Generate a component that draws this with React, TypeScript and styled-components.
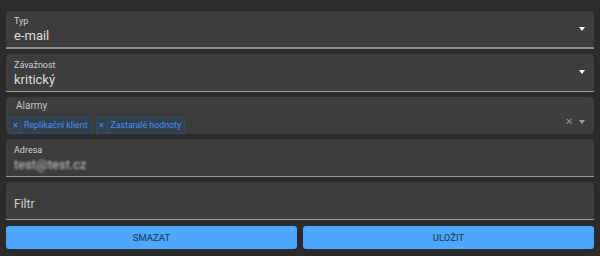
import styled, { createGlobalStyle } from "styled-components";

const GlobalStyle = createGlobalStyle`
  html, body {
    margin: 0;
    padding: 0;
    background: #2b2b2b;
    font-family: Roboto, "Liberation Sans", sans-serif;
  }
`;

const Form = styled.div`
  display: flex;
  flex-direction: column;
  gap: 5px;
  padding: 11px 6px 0 6px;
  width: 588px;
`;

const Field = styled.div<{ $thick?: boolean; $plain?: boolean }>`
  position: relative;
  height: ${({ $thick }) => ($thick ? "36px" : "37px")};
  background: #3d3d3d;
  border-radius: 4px 4px ${({ $plain }) => ($plain ? "4px 4px" : "0 0")};
  border-bottom: ${({ $thick, $plain }) =>
    $plain ? "none" : $thick ? "2px solid #8a8a8a" : "1px solid #9a9a9a"};
  display: flex;
  flex-direction: column;
  justify-content: center;
  padding: 0 30px 0 8px;
  box-sizing: content-box;
`;

const Label = styled.div`
  font-size: 9px;
  color: #d0d0d0;
  line-height: 11px;
  margin-top: 2px;
`;

const Value = styled.div<{ $blur?: boolean }>`
  font-size: 13px;
  color: #dcdcdc;
  line-height: 17px;
  filter: ${({ $blur }) => ($blur ? "blur(1.2px)" : "none")};
  opacity: ${({ $blur }) => ($blur ? 0.85 : 1)};
`;

const Placeholder = styled.div`
  font-size: 12px;
  color: #d0d0d0;
  padding-top: 6px;
`;

const Arrow = styled.span<{ $dim?: boolean }>`
  position: absolute;
  right: 9px;
  top: ${({ $dim }) => ($dim ? "23px" : "16px")};
  width: 0;
  height: 0;
  border-left: 3.5px solid transparent;
  border-right: 3.5px solid transparent;
  border-top: 4px solid ${({ $dim }) => ($dim ? "#9a9a9a" : "#ffffff")};
`;

const Clear = styled.span`
  position: absolute;
  right: 21px;
  top: 19px;
  font-size: 10px;
  color: #8c8c8c;
  line-height: 12px;
`;

const MultiField = styled(Field)`
  justify-content: flex-start;
  padding-left: 3px;
  height: 37px;
`;

const MultiLabel = styled.div`
  font-size: 10px;
  color: #c4c4c4;
  padding: 3px 0 0 7px;
  line-height: 12px;
`;

const ChipRow = styled.div`
  display: flex;
  gap: 4px;
  margin-top: 5px;
`;

const Chip = styled.div`
  display: flex;
  align-items: center;
  height: 15px;
  background: #343f4c;
  border: 1px solid #2d4c72;
  border-radius: 1px;
  font-size: 8.8px;
  color: #3f8ff2;
`;

const ChipX = styled.span`
  width: 10px;
  text-align: center;
  font-size: 7.5px;
  border-right: 1px solid #2d4c72;
  height: 15px;
  line-height: 15px;
`;

const ChipText = styled.span`
  padding: 0 3px;
  line-height: 15px;
`;

const Buttons = styled.div`
  display: grid;
  grid-template-columns: 1fr 1fr;
  gap: 6px;
  margin-top: 1px;
`;

const Button = styled.button`
  height: 23px;
  background: #4ea7ff;
  border: none;
  border-radius: 3px;
  color: #284a72;
  font-family: Roboto, "Liberation Sans", sans-serif;
  font-size: 9.5px;
  font-weight: 500;
  text-transform: uppercase;
  padding: 0;
`;

export default function App() {
  return (
    <>
      <GlobalStyle />
      <Form>
        <Field $thick>
          <Label>Typ</Label>
          <Value>e-mail</Value>
          <Arrow />
        </Field>
        <Field>
          <Label>Závažnost</Label>
          <Value>kritický</Value>
          <Arrow />
        </Field>
        <MultiField $plain>
          <MultiLabel>Alarmy</MultiLabel>
          <ChipRow>
            <Chip>
              <ChipX>✕</ChipX>
              <ChipText>Replikační klient</ChipText>
            </Chip>
            <Chip>
              <ChipX>✕</ChipX>
              <ChipText>Zastaralé hodnoty</ChipText>
            </Chip>
          </ChipRow>
          <Clear>✕</Clear>
          <Arrow $dim />
        </MultiField>
        <Field>
          <Label>Adresa</Label>
          <Value $blur>test@test.cz</Value>
        </Field>
        <Field>
          <Placeholder>Filtr</Placeholder>
        </Field>
        <Buttons>
          <Button>Smazat</Button>
          <Button>Uložit</Button>
        </Buttons>
      </Form>
    </>
  );
}
